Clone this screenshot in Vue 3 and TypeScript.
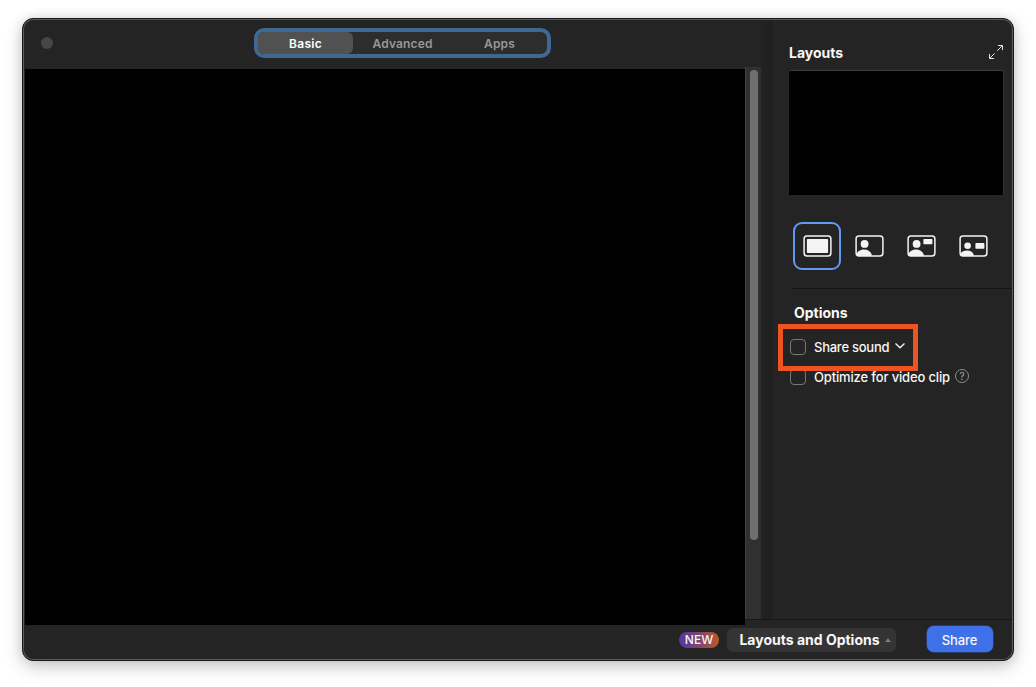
<script setup lang="ts">
import { ref } from 'vue'

const tabs: string[] = ['Basic', 'Advanced', 'Apps']
const activeTab = ref<number>(0)

type LayoutKind = 'screen' | 'corner' | 'inset' | 'side'
const layouts: LayoutKind[] = ['screen', 'corner', 'inset', 'side']
const activeLayout = ref<LayoutKind>('screen')
</script>

<template>
  <div class="desktop">
    <div class="window">
      <div class="body">
        <main class="left">
          <header class="bar">
            <span class="dot"></span>
            <nav class="tabs">
              <button
                v-for="(t, i) in tabs"
                :key="t"
                class="tab"
                :class="{ on: i === activeTab }"
                @click="activeTab = i"
              >{{ t }}</button>
            </nav>
          </header>
          <div class="stage"></div>
        </main>
        <div class="track"><div class="thumb"></div></div>
        <div class="gutter"></div>
        <aside class="side">
          <div class="side-head">
            <h2 class="t-layouts">Layouts</h2>
            <svg class="expand" width="16" height="16" viewBox="0 0 16 16" fill="none" stroke="#e4e4e4" stroke-width="1">
              <path d="M10 1.500h4.500V6M14.500 1.500L9.200 6.800M1.500 10v4.500H6M1.500 14.500l5.100-5.100" />
            </svg>
          </div>
          <div class="preview"></div>
          <div class="layouts">
            <button
              v-for="k in layouts"
              :key="k"
              class="layout"
              :class="{ on: k === activeLayout }"
              @click="activeLayout = k"
            >
              <svg width="30" height="24" viewBox="0 0 30 24">
                <rect x="2.100" y="1.900" width="26.800" height="20" rx="2.800" fill="none" stroke="#f4f4f4" stroke-width="1.500" />
                <g fill="#f4f4f4" transform="translate(.4 0)">
                  <rect v-if="k === 'screen'" x="4.500" y="4.900" width="21.200" height="14.100" rx=".8" />
                  <template v-if="k === 'corner' || k === 'inset'">
                    <circle cx="10.200" cy="9.900" r="3.900" />
                    <path d="M2.200 20C3 17.200 6.400 15.500 9.700 15.500C13.200 15.500 16 17.300 17.200 20.300V22H3.500Z" />
                  </template>
                  <rect v-if="k === 'inset'" x="17" y="5" width="9" height="5.200" rx=".8" />
                  <template v-if="k === 'side'">
                    <circle cx="9.200" cy="11.700" r="3.300" />
                    <path d="M2.200 19.600C3.200 17.600 5.800 16.500 8.700 16.500C11.800 16.500 14.400 18 15.200 20.500V22H3.500Z" />
                    <rect x="17" y="9.100" width="9" height="5.600" rx=".8" />
                  </template>
                </g>
              </svg>
            </button>
          </div>
          <section class="options">
            <h2 class="t-options">Options</h2>
            <div class="highlight">
              <span class="check"></span>
              <span class="t-sound">Share sound</span>
              <svg class="chev" width="12" height="8" viewBox="0 0 12 8" fill="none" stroke="#f0f0f0" stroke-width="1.400">
                <path d="M1.500 1.400L6 5.800L10.500 1.400" />
              </svg>
            </div>
            <div class="option">
              <span class="check"></span>
              <span class="t-video">Optimize for video clip</span>
              <span class="help">?</span>
            </div>
          </section>
        </aside>
      </div>
      <footer class="footer">
        <span class="new"><span>NEW</span></span>
        <button class="menu"><span class="t-menu">Layouts and Options</span><i class="up"></i></button>
        <button class="share">Share</button>
      </footer>
    </div>
  </div>
</template>

<style>
body { margin: 0; background: #fff; }
</style>

<style scoped>
.desktop {
  box-sizing: border-box;
  width: 1036px;
  height: 687px;
  padding: 18px 22px;
  overflow: hidden;
  background: #fff;
  font-family: Inter, "Liberation Sans", sans-serif;
  color: #f7f7f7;
}
.desktop * { box-sizing: border-box; }
button { border: 0; padding: 0; margin: 0; background: none; font: inherit; color: inherit; }
h2 { margin: 0; font-size: 14px; font-weight: 750; line-height: 18px; white-space: nowrap; }
.window {
  width: 992px;
  height: 643px;
  border: 1px solid #1b1a1b;
  border-radius: 11px;
  background: #242424;
  box-shadow: inset 0 0 0 1px #5c5c5c, 0 6px 18px rgba(0, 0, 0, .2), 0 0 12px rgba(0, 0, 0, .1);
  padding: 1px;
  display: flex;
  flex-direction: column;
}
.body { display: flex; height: 599px; }
.left { width: 721px; height: 605px; padding-left: 1px; display: flex; flex-direction: column; position: relative; z-index: 1; }
.bar { height: 49px; display: flex; align-items: flex-start; flex-shrink: 0; }
.dot { width: 12px; height: 12px; margin: 17px 0 0 16px; border-radius: 50%; background: #464646; }
.tabs {
  display: flex;
  margin: 8px 0 0 201px;
  width: 297px;
  height: 30px;
  border: 4px solid #3f6893;
  border-radius: 10px;
  background: #2d2d2d;
}
.tab { width: 97px; height: 22px; padding: 2px 0 0 2px; font-size: 12px; font-weight: 600; line-height: 20px; letter-spacing: .15px; color: #989898; }
.tab.on { width: 95px; padding-left: 0; background: #515151; border-radius: 6px; color: #fff; letter-spacing: .25px; }
.stage { flex: 1; background: #000; }
.track { width: 16px; margin-top: 47px; background: #303030; border-left: 1px solid #424242; padding: 3px 0 0 4px; }
.thumb { width: 8px; height: 470px; border-radius: 4px; background: #6f6f6f; }
.gutter { width: 12px; background: linear-gradient(90deg, #232323, #1f1f1f); }
.side { width: 239px; padding: 24px 0 0 16px; }
.side-head { display: flex; justify-content: space-between; height: 26px; padding-right: 8px; }
.expand { display: block; }
.preview { width: 215px; height: 125px; border-top: 1px solid #3c3c3c; border-right: 1px solid #303030; border-radius: 2px 3px 0 0; background: #000; }
.layouts { display: flex; gap: 4px; padding: 27px 0 0 4px; }
.layout { width: 48px; height: 48px; display: grid; place-items: center; border-radius: 9px; }
.layout svg { display: block; }
.layout.on { border: 2px solid #6299f1; }
.options { margin: 18px 0 0 3px; border-top: 1px solid #151515; padding: 15px 0 0 2px; }
.highlight {
  display: flex;
  align-items: center;
  width: 140px;
  height: 47px;
  margin: 2px 0 0 -16px;
  padding: 0 0 2px 7px;
  border: 5px solid #ee5423;
  position: relative;
  z-index: 1;
}
.check { width: 16px; height: 16px; flex-shrink: 0; border: 1px solid #777; border-radius: 4px; margin-right: 8px; }
.t-sound, .t-video { font-size: 13px; font-weight: 500; line-height: 18px; white-space: nowrap; letter-spacing: -.15px; }
.t-sound { letter-spacing: -.25px; }
.chev { margin: -2px 0 0 5px; }
.option { display: flex; align-items: center; height: 18px; margin: -3px 0 0 -4px; }
.help { width: 14px; height: 14px; margin: -2px 0 0 5px; border: 1px solid #8c8c8c; border-radius: 50%; color: #aaa; font-size: 10px; line-height: 12px; text-align: center; }
.footer { display: flex; align-items: center; height: 40px; border-top: 1px solid #161616; padding-left: 655px; }
.new { display: flex; align-items: center; justify-content: center; width: 40px; height: 16px; padding-top: 1px; border-radius: 8px; background: linear-gradient(90deg, #5337a4, #7e4570 50%, #bb5827); font-size: 12px; font-weight: 500; line-height: 16px; }
.menu { display: flex; align-items: center; width: 169px; height: 24px; margin-left: 8px; padding-left: 12px; border-radius: 6px; background: #343434; }
.t-menu { width: 141px; font-size: 14px; font-weight: 750; line-height: 18px; white-space: nowrap; }
.up { margin-left: 5px; border: 3.5px solid transparent; border-top: 0; border-bottom: 4px solid #777a80; }
.share { width: 66px; height: 26px; margin: -1px 0 0 30.5px; padding-top: 1px; border-radius: 7px; background: #3e70e8; box-shadow: 0 0 0 .5px #3459a8; font-size: 13px; font-weight: 500; letter-spacing: -.1px; }
</style>
